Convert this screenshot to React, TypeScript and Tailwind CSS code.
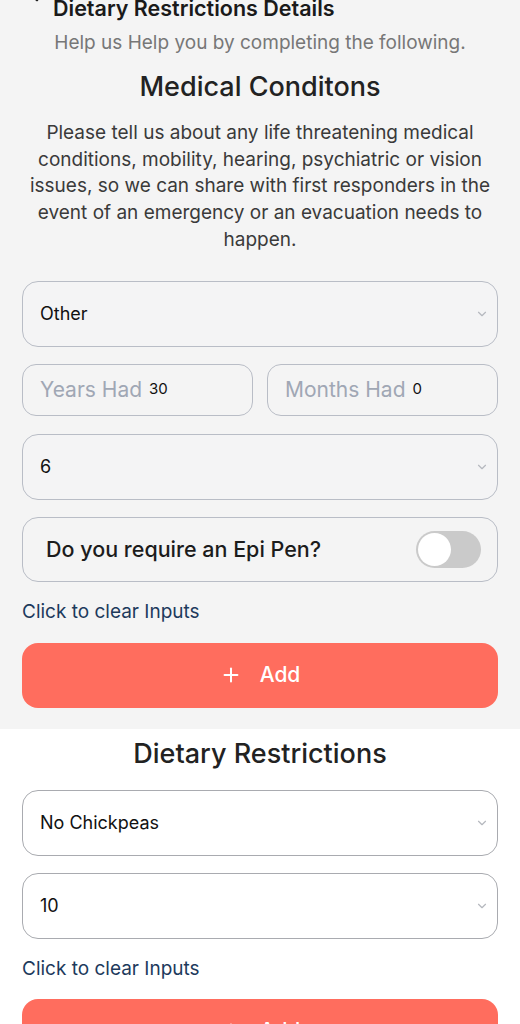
import { ChevronDown, ChevronLeft, Plus } from "lucide-react";

const font = { fontFamily: "Inter, 'Noto Sans', sans-serif" };

function SelectBox({ value, white }: { value: string; white?: boolean }) {
  return (
    <div
      className={`flex h-[66px] items-center justify-between rounded-[16px] border pl-[17px] pr-[8px] ${
        white ? "border-[#a9abb0] bg-white" : "border-[#b9bdc6] bg-[#f4f4f5]"
      }`}
    >
      <span className="text-[18px] text-[#111]">{value}</span>
      <ChevronDown className="h-[14px] w-[14px] text-[#b5b8be]" strokeWidth={2} />
    </div>
  );
}

function ClearLink() {
  return <div className="text-[19px] leading-[24px] text-[#1d3a5c]">Click to clear Inputs</div>;
}

function AddButton() {
  return (
    <button className="flex h-[65px] w-full items-center justify-center gap-[18px] rounded-[16px] bg-[#ff6d5e] text-white">
      <Plus className="h-[22px] w-[22px]" strokeWidth={2.2} />
      <span className="text-[21px] font-medium">Add</span>
    </button>
  );
}

export default function App() {
  return (
    <div style={font} className="min-h-screen overflow-hidden bg-white">
      <div className="bg-[#f4f4f4] px-[22px] pb-[21px]">
        {/* back row, mostly scrolled off */}
        <div className="-mt-[30px] flex h-[33px] items-end">
          <ChevronLeft className="-mb-[3px] h-[24px] w-[24px] text-[#222]" strokeWidth={2.5} />
        </div>
        <div className="-mt-[7px] pl-[31px] text-[21.5px] font-semibold leading-[24px] text-[#1a1a1a]">
          Dietary Restrictions Details
        </div>
        <div className="mt-[11px] text-center text-[19px] leading-[24px] text-[#777]">
          Help us Help you by completing the following.
        </div>
        <h2 className="mt-[16px] text-center text-[27px] font-medium leading-[32px] text-[#222]">
          Medical Conditons
        </h2>
        <p className="mt-[17px] px-[2px] text-center text-[19px] leading-[26.7px] text-[#3a3a3a]">
          Please tell us about any life threatening medical conditions, mobility, hearing, psychiatric or vision
          issues, so we can share with first responders in the event of an emergency or an evacuation needs to
          happen.
        </p>

        <div className="mt-[27px]">
          <SelectBox value="Other" />
        </div>

        <div className="mt-[17px] flex gap-[14px]">
          <div className="flex h-[52px] flex-1 items-center gap-[7px] rounded-[14px] border border-[#b9bdc6] pl-[17px]">
            <span className="text-[21px] text-[#a0a7b4]">Years Had</span>
            <span className="text-[15px] text-[#111]">30</span>
          </div>
          <div className="flex h-[52px] flex-1 items-center gap-[7px] rounded-[14px] border border-[#b9bdc6] pl-[17px]">
            <span className="text-[21px] text-[#a0a7b4]">Months Had</span>
            <span className="text-[15px] text-[#111]">0</span>
          </div>
        </div>

        <div className="mt-[18px]">
          <SelectBox value="6" />
        </div>

        <div className="mt-[17px] flex h-[65px] items-center justify-between rounded-[16px] border border-[#b9bdc6] pl-[23px] pr-[16px]">
          <span className="text-[21.5px] font-medium text-[#1c1c1c]">Do you require an Epi Pen?</span>
          <div className="flex h-[37px] w-[65px] items-center rounded-full bg-[#cacaca] px-[2px]">
            <div className="h-[33px] w-[33px] rounded-full bg-white" />
          </div>
        </div>

        <div className="mt-[18px]">
          <ClearLink />
        </div>
        <div className="mt-[19px]">
          <AddButton />
        </div>
      </div>

      <div className="bg-white px-[22px] pt-[9px]">
        <h2 className="text-center text-[27px] font-medium leading-[32px] text-[#222]">Dietary Restrictions</h2>
        <div className="mt-[20px]">
          <SelectBox value="No Chickpeas" white />
        </div>
        <div className="mt-[17px]">
          <SelectBox value="10" white />
        </div>
        <div className="mt-[18px]">
          <ClearLink />
        </div>
        <div className="mt-[18px]">
          <AddButton />
        </div>
        <div className="h-[40px]" />
      </div>
    </div>
  );
}
